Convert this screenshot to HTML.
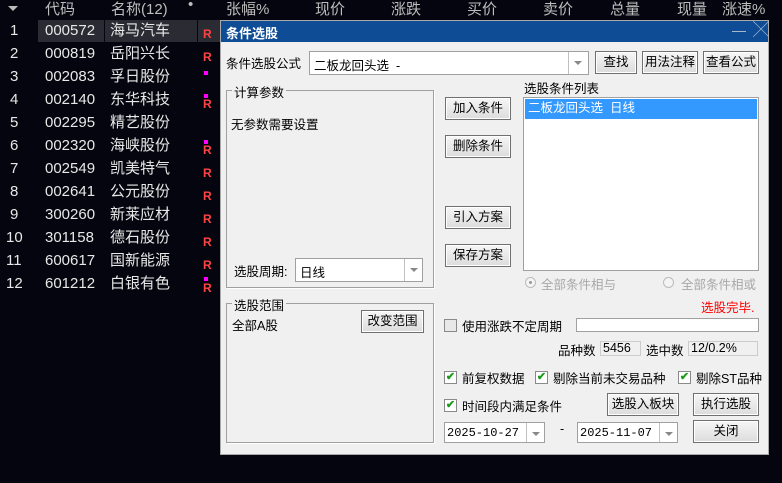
<!DOCTYPE html>
<html><head><meta charset="utf-8"><style>
*{margin:0;padding:0;box-sizing:border-box}
body{width:782px;height:483px;background:#05050f;position:relative;overflow:hidden;font-family:"Liberation Sans","Noto Sans CJK SC",sans-serif;}
.a{position:absolute;white-space:nowrap}
.h{color:#bdbdbd;font-size:15px;top:-2px}
.r{color:#e8e8e8;font-size:15px;line-height:23px;height:23px}
.R{color:#ff4444;font-size:12px;font-weight:bold}
.m{width:4px;height:4px;background:#ff00ff}
.dlg{position:absolute;left:220px;top:20px;width:549px;height:435px;background:#f0f0f0;border:1px solid #aaa}
.t{font-size:12.5px;color:#000}
.btn{position:absolute;border:1px solid #707070;background:linear-gradient(#f6f6f6,#dcdcdc);font-size:12.5px;text-align:center;line-height:20px;box-shadow:inset 0 0 0 1px #fff}
.box{position:absolute;background:#fff;border:1px solid #a0a0a0}
.grp{position:absolute;border:1px solid #a0a0a0;box-shadow:1px 1px 0 #fff}
.gl{position:absolute;background:#f0f0f0;padding:0 2px;font-size:12.5px;top:-9px;left:5px}
.arr{position:absolute;right:0;top:0;bottom:0;width:18px;border-left:1px solid #c0c0c0}
.arr:after{content:"";position:absolute;left:5px;top:9px;border-left:4px solid transparent;border-right:4px solid transparent;border-top:4px solid #888}
.cb{position:absolute;width:13px;height:13px;border:1px solid #8a8a8a;background:#fff;font-size:11px;color:#1a9a1a;line-height:11px;text-align:center;font-weight:bold}
</style></head><body>
<div class="a" style="left:8px;top:6px;border-left:5px solid transparent;border-right:5px solid transparent;border-top:5px solid #bbb"></div>
<div class="a h" style="left:45px">代码</div>
<div class="a h" style="left:111px">名称(12)</div>
<div class="a h" style="left:188px;top:-4px">•</div>
<div class="a h" style="left:226px">张幅%</div>
<div class="a h" style="left:315px">现价</div>
<div class="a h" style="left:391px">涨跌</div>
<div class="a h" style="left:467px">买价</div>
<div class="a h" style="left:543px">卖价</div>
<div class="a h" style="left:610px">总量</div>
<div class="a h" style="left:677px">现量</div>
<div class="a h" style="left:722px">涨速%</div>
<div class="a" style="left:38px;top:20px;width:66px;height:22px;background:#2a2b33"></div>
<div class="a" style="left:105px;top:20px;width:92px;height:22px;background:#2a2b33"></div>
<div class="a" style="left:198px;top:20px;width:23px;height:22px;background:#2a2b33"></div>

<div class="a r" style="left:10px;top:19px">1</div><div class="a r" style="left:45px;top:19px">000572</div><div class="a r" style="left:110px;top:19px">海马汽车</div><div class="a R" style="left:203px;top:27px">R</div>
<div class="a r" style="left:10px;top:42px">2</div><div class="a r" style="left:45px;top:42px">000819</div><div class="a r" style="left:110px;top:42px">岳阳兴长</div><div class="a R" style="left:203px;top:50px">R</div>
<div class="a r" style="left:10px;top:65px">3</div><div class="a r" style="left:45px;top:65px">002083</div><div class="a r" style="left:110px;top:65px">孚日股份</div><div class="a m" style="left:204px;top:71px"></div>
<div class="a r" style="left:10px;top:88px">4</div><div class="a r" style="left:45px;top:88px">002140</div><div class="a r" style="left:110px;top:88px">东华科技</div><div class="a m" style="left:204px;top:94px"></div><div class="a R" style="left:203px;top:97px">R</div>
<div class="a r" style="left:10px;top:111px">5</div><div class="a r" style="left:45px;top:111px">002295</div><div class="a r" style="left:110px;top:111px">精艺股份</div>
<div class="a r" style="left:10px;top:134px">6</div><div class="a r" style="left:45px;top:134px">002320</div><div class="a r" style="left:110px;top:134px">海峡股份</div><div class="a m" style="left:204px;top:140px"></div><div class="a R" style="left:203px;top:143px">R</div>
<div class="a r" style="left:10px;top:157px">7</div><div class="a r" style="left:45px;top:157px">002549</div><div class="a r" style="left:110px;top:157px">凯美特气</div><div class="a R" style="left:203px;top:166px">R</div>
<div class="a r" style="left:10px;top:180px">8</div><div class="a r" style="left:45px;top:180px">002641</div><div class="a r" style="left:110px;top:180px">公元股份</div><div class="a R" style="left:203px;top:189px">R</div>
<div class="a r" style="left:10px;top:203px">9</div><div class="a r" style="left:45px;top:203px">300260</div><div class="a r" style="left:110px;top:203px">新莱应材</div><div class="a R" style="left:203px;top:212px">R</div>
<div class="a r" style="left:6px;top:226px">10</div><div class="a r" style="left:45px;top:226px">301158</div><div class="a r" style="left:110px;top:226px">德石股份</div><div class="a R" style="left:203px;top:235px">R</div>
<div class="a r" style="left:6px;top:249px">11</div><div class="a r" style="left:45px;top:249px">600617</div><div class="a r" style="left:110px;top:249px">国新能源</div><div class="a R" style="left:203px;top:258px">R</div>
<div class="a r" style="left:6px;top:272px">12</div><div class="a r" style="left:45px;top:272px">601212</div><div class="a r" style="left:110px;top:272px">白银有色</div><div class="a m" style="left:204px;top:277px"></div><div class="a R" style="left:203px;top:281px">R</div>

<div class="dlg">
<div class="a" style="left:0;top:0;width:547px;height:21px;background:#0f4c96"></div>
<div class="a" style="left:5px;top:2px;color:#fff;font-size:13px;font-weight:bold">条件选股</div>
<div class="a" style="left:511px;top:10px;width:14px;height:1px;background:#aab8cc"></div>
<div class="a" style="left:532px;top:2px;color:#aab8cc;font-size:16px;line-height:16px">╳</div>

<div class="a t" style="left:5px;top:32px">条件选股公式</div>
<div class="box" style="left:88px;top:30px;width:280px;height:24px"><span class="a t" style="left:4px;top:3px">二板龙回头选&nbsp; -</span><div class="arr" style="width:20px"></div></div>
<div class="btn" style="left:374px;top:30px;width:42px;height:23px">查找</div>
<div class="btn" style="left:421px;top:30px;width:56px;height:23px">用法注释</div>
<div class="btn" style="left:482px;top:30px;width:56px;height:23px">查看公式</div>

<div class="grp" style="left:5px;top:69px;width:208px;height:198px"><div class="gl">计算参数</div></div>
<div class="a t" style="left:10px;top:93px">无参数需要设置</div>
<div class="a t" style="left:13px;top:240px">选股周期:</div>
<div class="box" style="left:74px;top:237px;width:128px;height:24px"><span class="a t" style="left:4px;top:3px">日线</span><div class="arr"></div></div>

<div class="grp" style="left:5px;top:282px;width:208px;height:140px"><div class="gl">选股范围</div></div>
<div class="a t" style="left:11px;top:294px">全部A股</div>
<div class="btn" style="left:140px;top:289px;width:63px;height:23px">改变范围</div>

<div class="btn" style="left:224px;top:76px;width:66px;height:23px">加入条件</div>
<div class="btn" style="left:224px;top:114px;width:66px;height:23px">删除条件</div>
<div class="btn" style="left:224px;top:185px;width:66px;height:23px">引入方案</div>
<div class="btn" style="left:224px;top:223px;width:66px;height:23px">保存方案</div>

<div class="a t" style="left:303px;top:57px">选股条件列表</div>
<div class="box" style="left:302px;top:76px;width:236px;height:174px"><div class="a" style="left:1px;top:1px;width:232px;height:20px;background:#3399ff;color:#fff;font-size:12.5px;line-height:19px;padding-left:3px">二板龙回头选&nbsp; 日线</div></div>

<div class="a" style="left:304px;top:256px;width:11px;height:11px;border-radius:50%;border:1px solid #bbb;background:#f4f4f4"><div class="a" style="left:3px;top:3px;width:3px;height:3px;border-radius:50%;background:#999"></div></div>
<div class="a t" style="left:320px;top:253px;color:#a8a8a8">全部条件相与</div>
<div class="a" style="left:442px;top:256px;width:11px;height:11px;border-radius:50%;border:1px solid #bbb;background:#f4f4f4"></div>
<div class="a t" style="left:460px;top:253px;color:#a8a8a8">全部条件相或</div>

<div class="a t" style="left:480px;top:276px;color:#f00">选股完毕.</div>

<div class="cb" style="left:223px;top:298px;background:#e8e8e8"></div>
<div class="a t" style="left:241px;top:295px">使用涨跌不定周期</div>
<div class="box" style="left:355px;top:297px;width:183px;height:14px"></div>

<div class="a t" style="left:337px;top:319px">品种数</div>
<div class="a" style="left:379px;top:320px;width:41px;height:15px;border:1px solid #ccc;font-size:12.5px;line-height:13px;padding-left:2px">5456</div>
<div class="a t" style="left:425px;top:319px">选中数</div>
<div class="a" style="left:467px;top:320px;width:70px;height:15px;border:1px solid #ccc;font-size:12.5px;line-height:13px;padding-left:2px">12/0.2%</div>

<div class="cb" style="left:223px;top:350px">✔</div><div class="a t" style="left:241px;top:347px">前复权数据</div>
<div class="cb" style="left:314px;top:350px">✔</div><div class="a t" style="left:332px;top:347px">剔除当前未交易品种</div>
<div class="cb" style="left:457px;top:350px">✔</div><div class="a t" style="left:475px;top:347px">剔除ST品种</div>

<div class="cb" style="left:223px;top:378px">✔</div><div class="a t" style="left:241px;top:375px">时间段内满足条件</div>
<div class="btn" style="left:386px;top:372px;width:72px;height:23px">选股入板块</div>
<div class="btn" style="left:472px;top:372px;width:66px;height:23px">执行选股</div>

<div class="box" style="left:223px;top:401px;width:101px;height:21px"><span class="a" style="left:2px;top:3px;font-family:'Liberation Mono',monospace;font-size:12px">2025-10-27</span><div class="arr"></div></div>
<div class="a t" style="left:339px;top:401px">-</div>
<div class="box" style="left:356px;top:401px;width:101px;height:21px"><span class="a" style="left:2px;top:3px;font-family:'Liberation Mono',monospace;font-size:12px">2025-11-07</span><div class="arr"></div></div>
<div class="btn" style="left:472px;top:399px;width:66px;height:23px">关闭</div>
</div>
</body></html>
